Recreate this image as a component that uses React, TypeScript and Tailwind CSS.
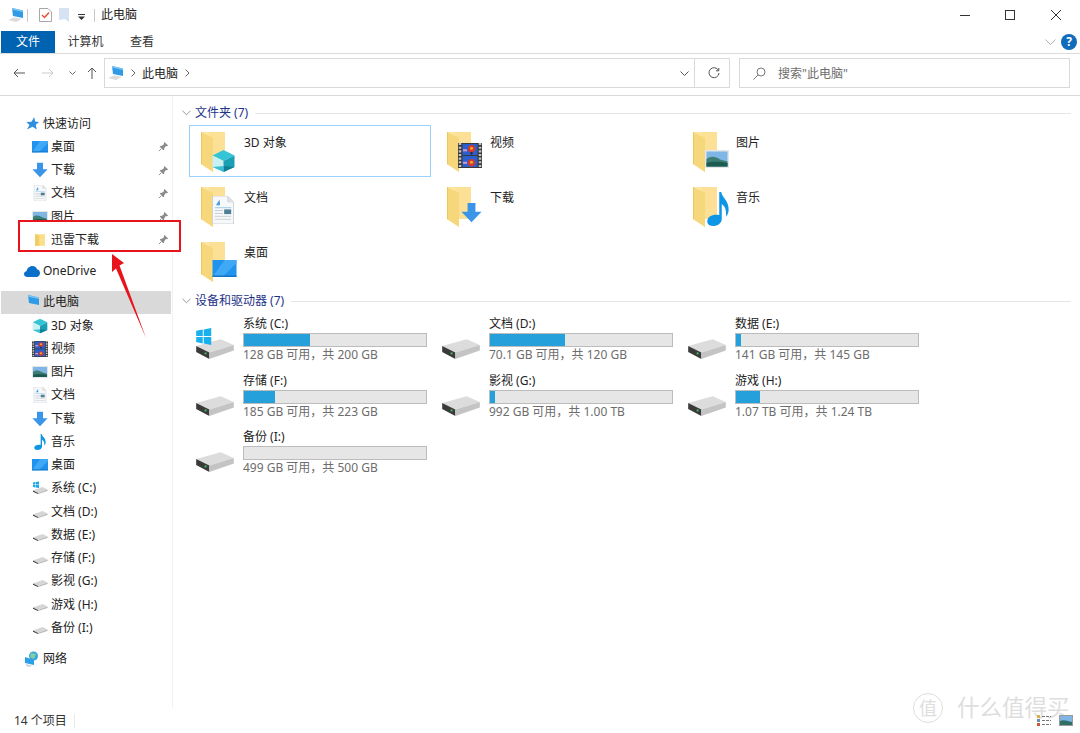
import React from 'react';

// Drawings on a 24x24 box, reused by the nav pane and the folder tiles
function CubeArt() {
  return (
    <g>
      <path d="M12 1 23 6.5 12 12 1 6.5Z" fill="#35c4d6" />
      <path d="M1 6.5 12 12V23L1 18Z" fill="#c9f1f4" />
      <path d="M23 6.5 12 12V23L23 18Z" fill="#1a9fb5" />
      <path d="M12 17 23 18 12 23Z" fill="#0f7f95" />
      <path d="M1 18 12 17V23Z" fill="#3cc0d2" />
    </g>
  );
}

function FilmArt() {
  return (
    <g>
      <rect x="0" y="0" width="24" height="24" fill="#3a3a3a" />
      <path d="M2 0V24M22 0V24" stroke="#c4c4c4" strokeWidth="2.500" strokeDasharray="2 1.500" />
      <rect x="4.500" y="1" width="15" height="10.500" fill="#2a5fd0" />
      <rect x="4.500" y="12.500" width="15" height="10.500" fill="#2a5fd0" />
      <circle cx="13.500" cy="5.500" r="3.600" fill="#d6372c" />
      <circle cx="13.500" cy="5" r="1.500" fill="#e8b020" />
      <rect x="12.500" y="8.800" width="2" height="2.200" fill="#222" />
      <circle cx="13.500" cy="19" r="3.600" fill="#d6372c" />
      <circle cx="13.500" cy="18.500" r="1.500" fill="#e8b020" />
      <rect x="5" y="6" width="4" height="2" fill="#d995c8" />
      <rect x="5" y="18" width="4" height="2" fill="#d995c8" />
    </g>
  );
}

function PictureArt() {
  return (
    <g>
      <rect x="0" y="3" width="24" height="18" fill="#e4e6e8" />
      <rect x="1.5" y="4.5" width="21" height="15" fill="#7fb6e6" />
      <path d="M1.5 12C6 8.5 11 9.5 15 12.5L22.5 14.5V19.5H1.5Z" fill="#3d7f74" />
      <path d="M1.5 16C8 14 16 15 22.5 16V19.5H1.5Z" fill="#1d5a50" />
    </g>
  );
}

function DocArt() {
  return (
    <g>
      <path d="M3 0H16L21 5V24H3Z" fill="#f7f8fa" stroke="#c8ccd0" strokeWidth="0.7" />
      <path d="M16 0V5H21" fill="#dfe3e6" stroke="#c8ccd0" strokeWidth="0.5" />
      <path d="M6 8 9 3 9.5 8Z" fill="#4a9bd9" />
      <rect x="5" y="9.5" width="14" height="1" fill="#a9d1ef" />
      <rect x="13" y="11.5" width="6" height="4" fill="#4e7f96" />
      <rect x="5" y="12" width="7" height="0.8" fill="#c9cdd1" />
      <rect x="5" y="14.5" width="7" height="0.8" fill="#c9cdd1" />
      <rect x="5" y="17" width="14" height="0.8" fill="#c9cdd1" />
      <rect x="5" y="19.5" width="14" height="0.8" fill="#c9cdd1" />
    </g>
  );
}

function DownArt() {
  return <path d="M7.5 1H16.5V11H23.5L12 23 .5 11H7.5Z" fill="#3a95e8" />;
}

function NoteArt() {
  return (
    <path
      d="M13 0H14.6C15 4 21 6 20.5 13 20.2 15 19.4 16.5 18.4 17.4 19 12 17 9.5 15 8.6V19C15 22 11.500 24 8 24 4.500 24 3 22.300 3.500 20 4 17.500 7.500 15.500 13 16.300Z"
      fill="#0d96e6"
    />
  );
}

function DesktopArt() {
  return (
    <g>
      <rect x="0" y="3" width="24" height="17" fill="#1f93ee" />
      <path d="M0 20 12 3H24V6L10 20Z" fill="#3fa9f5" />
      <rect x="0" y="18.500" width="24" height="1.500" fill="#1475c4" />
    </g>
  );
}

function Star({ className }: { className?: string }) {
  return (
    <svg viewBox="0 0 16 16" className={className}>
      <path d="M9.800 1 10.800 5.800 15 6.500 11.500 9.400 12.500 14.500 8 11.500 2 14.500 4.800 9.500 1.500 6.500 7 6Z" fill="#2f8fdc" />
    </svg>
  );
}

function Pin() {
  return (
    <svg viewBox="0 0 12 12" className="w-[11px] h-[11px]">
      <path d="M7 1 11 5 9.800 5.600 8.500 5.500 6.800 7.800 6.600 9.500 5.700 10 2 6.300 2.500 5.400 4.300 5.200 6.500 3.500 6.400 2.200Z" fill="#8a8a8a" />
      <path d="M3.500 8.500 1 11" stroke="#8a8a8a" strokeWidth="1" />
    </svg>
  );
}

function SmallDrive({ win }: { win?: boolean }) {
  return (
    <svg viewBox="0 0 16 16" className="w-4 h-4">
      <path d="M1 10.500 10.500 7 15.500 9.500 6 13Z" fill="#d6d6d6" />
      <path d="M1 10.500 6 13V14L1 11.800Z" fill="#3c3c3c" />
      <path d="M6 13 15.500 9.500V11L6 14Z" fill="#b8b8b8" />
      {win && (
        <path d="M1 2.500 3.500 2V4.500H1ZM4 2 7 1.500V4.500H4ZM1 5H3.500V7.500L1 7ZM4 5H7V8L4 7.500Z" fill="#18a7e8" />
      )}
    </svg>
  );
}

function BigDrive({ win }: { win?: boolean }) {
  return (
    <svg viewBox="0 0 42 34" className="w-[40px] h-[32px]">
      <path d="M1 19 27 12 41 18 15 26Z" fill="#dcdcdc" />
      <path d="M1 19 15 26V33L1 25.500Z" fill="#3a3a3a" />
      <path d="M15 26 41 18V24L15 33Z" fill="#c4c4c4" />
      <rect x="10" y="26" width="2" height="2" fill="#3fc46a" />
      {win && (
        <path d="M1 3 8 1.500V8.500H1ZM9 1.500 17 0V8.500H9ZM1 9.500H8V16.500L1 15ZM9 9.500H17V18L9 16.500Z" fill="#19b0ee" />
      )}
    </svg>
  );
}

function ThisPc({ className }: { className?: string }) {
  return (
    <svg viewBox="0 0 16 14" className={className}>
      <path d="M4 0 15 2.500V10L5 8Z" fill="#2f9be6" />
      <path d="M4 0 15 2.500V4L4.300 1.800Z" fill="#7cc4f2" />
      <path d="M0 12 6 9.500 14 11 8 14Z" fill="#dcdcdc" />
    </svg>
  );
}

function Cloud() {
  return (
    <svg viewBox="0 0 16 11" className="w-[16px] h-[11px]">
      <path d="M3.500 11C1.500 11 0 9.700 0 8 0 6.500 1 5.400 2.500 5.200 3 2.300 5.500 0 8.300 0 10.500 0 12.300 1.200 13 3.200 14.800 3.500 16 5 16 7 16 9.300 14.500 11 12.500 11Z" fill="#0a6fc9" />
    </svg>
  );
}

function NetworkIcon() {
  return (
    <svg viewBox="0 0 16 16" className="w-4 h-4">
      <circle cx="9.500" cy="5" r="4.500" fill="#3aa6d8" />
      <path d="M7 2 12 3 10 8 6 6Z" fill="#7fd0a8" />
      <path d="M1 6 10 9V14L1 12Z" fill="#2aa0ea" />
      <path d="M2 13 8 14.500 6 16 2 15Z" fill="#cfd3d6" />
    </svg>
  );
}

function FolderTile({ children }: { children: React.ReactNode }) {
  return (
    <svg viewBox="0 0 40 44" className="w-10 h-11 shrink-0">
      <path d="M0 0H24V32H12V40L0 32Z" fill="#fde6a2" />
      <rect x="8" y="0" width="16" height="32" fill="#fbe096" />
      <path d="M0 0 12 6V40L0 32Z" fill="#f7d77c" />
      <path d="M0 0H1V32.500L0 32Z" fill="#f0c65e" />
      {children}
    </svg>
  );
}

function SmallSvg({ children }: { children: React.ReactNode }) {
  return (
    <svg viewBox="0 0 24 24" className="w-4 h-4">
      {children}
    </svg>
  );
}

function SideRow({ icon, label, pin, top }: { icon: React.ReactNode; label: string; pin?: boolean; top?: boolean }) {
  return (
    <div className={`relative z-10 flex items-center h-[23.25px] ${top ? 'pl-[24px]' : 'pl-[32px]'}`}>
      <span className="w-4 h-4 flex items-center justify-center shrink-0">{icon}</span>
      <span className="ml-[3px] text-[#222]">{label}</span>
      {pin && (
        <span className="absolute left-[158px] top-[6px]">
          <Pin />
        </span>
      )}
    </div>
  );
}

const folders = [
  { name: '3D 对象', art: <svg x="10" y="17" width="25" height="24" viewBox="0 0 24 24"><CubeArt /></svg>, selected: true },
  { name: '视频', art: <svg x="11" y="11" width="24" height="25" viewBox="0 0 24 24" preserveAspectRatio="none"><FilmArt /></svg> },
  { name: '图片', art: <svg x="12" y="15" width="24" height="24" viewBox="0 0 24 24"><PictureArt /></svg> },
  { name: '文档', art: <svg x="8" y="9" width="28" height="28" viewBox="0 0 24 24"><DocArt /></svg> },
  { name: '下载', art: <svg x="14" y="15" width="21" height="21" viewBox="0 0 24 24"><DownArt /></svg> },
  { name: '音乐', art: <svg x="10" y="5" width="30" height="34" viewBox="0 0 24 24" preserveAspectRatio="none"><NoteArt /></svg> },
  { name: '桌面', art: <svg x="11" y="15" width="25" height="24" viewBox="0 0 24 24"><DesktopArt /></svg> },
];

const drives = [
  { name: '系统 (C:)', used: 36, info: '128 GB 可用，共 200 GB', win: true },
  { name: '文档 (D:)', used: 41, info: '70.1 GB 可用，共 120 GB' },
  { name: '数据 (E:)', used: 3, info: '141 GB 可用，共 145 GB' },
  { name: '存储 (F:)', used: 17, info: '185 GB 可用，共 223 GB' },
  { name: '影视 (G:)', used: 3, info: '992 GB 可用，共 1.00 TB' },
  { name: '游戏 (H:)', used: 13, info: '1.07 TB 可用，共 1.24 TB' },
  { name: '备份 (I:)', used: 0, info: '499 GB 可用，共 500 GB' },
];

function GroupHeader({ label }: { label: string }) {
  return (
    <div className="flex items-center h-4">
      <svg viewBox="0 0 10 6" className="w-[9px] h-[6px] ml-[9px] mr-[4px]">
        <path d="M.5.5 5 5 9.500.5" fill="none" stroke="#8a8a8a" />
      </svg>
      <span className="text-[#1e3287]">{label}</span>
      <span className="flex-1 h-px bg-[#e5e5e5] ml-[7px] mr-[9px]" />
    </div>
  );
}

export default function App() {
  return (
    <div className="relative w-[1080px] h-[733px] overflow-hidden bg-white text-[12px] leading-4 text-[#222] font-['Noto_Sans','Noto_Sans_CJK_SC',sans-serif]">
      {/* title bar */}
      <div className="flex items-center h-[30px]">
        <ThisPc className="w-4 h-[14px] ml-[8px]" />
        <span className="w-px h-[13px] bg-[#c8c8c8] ml-[3px]" />
        <svg viewBox="0 0 13 14" className="w-[13px] h-[14px] ml-[11px]">
          <path d="M.5.5H9L12.500 4V13.500H.5Z" fill="#fff" stroke="#a8a8a8" />
          <path d="M3 7 5.500 9.500 10 4.500" fill="none" stroke="#e2502c" strokeWidth="1.400" />
        </svg>
        <svg viewBox="0 0 10 14" className="w-[10px] h-[14px] ml-[7px]">
          <path d="M0 0H10V14L6 11 0 12Z" fill="#d5e3f2" />
        </svg>
        <svg viewBox="0 0 7 6" className="w-[7px] h-[6px] ml-[9px] mt-[3px]">
          <path d="M0 0H7V1H0ZM0 2.500H7L3.500 6Z" fill="#333" />
        </svg>
        <span className="w-px h-[13px] bg-[#c8c8c8] ml-[9px]" />
        <span className="ml-[6px]">此电脑</span>
        <div className="ml-auto flex items-center">
          <svg viewBox="0 0 10 1" className="w-[10px] h-px mr-[35px]"><rect width="10" height="1" fill="#333" /></svg>
          <svg viewBox="0 0 10 10" className="w-[10px] h-[10px] mr-[36px]"><rect x=".5" y=".5" width="9" height="9" fill="none" stroke="#333" /></svg>
          <svg viewBox="0 0 10 10" className="w-[10px] h-[10px] mr-[19px]"><path d="M0 0 10 10M10 0 0 10" stroke="#333" /></svg>
        </div>
      </div>

      {/* ribbon tabs */}
      <div className="flex items-center h-[23px] pl-px">
        <div className="w-[54px] h-[22px] bg-[#0063b1] text-white flex items-center justify-center">文件</div>
        <div className="w-[61px] text-center text-[#333]">计算机</div>
        <div className="w-[52px] text-center text-[#333]">查看</div>
        <div className="ml-auto flex items-center mr-[3px]">
          <svg viewBox="0 0 11 6" className="w-[11px] h-[6px] mr-[4px]"><path d="M.5.5 5.500 5.500 10.500.5" fill="none" stroke="#b0b0b0" /></svg>
          <span className="w-4 h-4 rounded-full bg-[#0f6cbd] text-white font-bold flex items-center justify-center ml-[1px]">?</span>
        </div>
      </div>
      <div className="h-px bg-[#dadbdc]" />

      {/* address row */}
      <div className="flex items-center h-[42px] pb-[3px] border-b border-[#d9d9d9]">
        <svg viewBox="0 0 12 10" className="w-3 h-[10px] ml-[13px]"><path d="M12 5H1M5 1 1 5 5 9" fill="none" stroke="#555" /></svg>
        <svg viewBox="0 0 12 10" className="w-3 h-[10px] ml-[17px]"><path d="M0 5H11M7 1 11 5 7 9" fill="none" stroke="#c9c9c9" /></svg>
        <svg viewBox="0 0 7 5" className="w-[7px] h-[5px] ml-[15px]"><path d="M.5.5 3.500 3.500 6.500.5" fill="none" stroke="#666" /></svg>
        <svg viewBox="0 0 10 12" className="w-[10px] h-3 ml-[11px]"><path d="M5 12V1M1 5 5 1 9 5" fill="none" stroke="#555" /></svg>
        <div className="flex items-center w-[626px] h-[30px] ml-[7px] border border-[#d9d9d9] pl-[3px]">
          <ThisPc className="w-4 h-[14px]" />
          <svg viewBox="0 0 5 8" className="w-[5px] h-2 ml-[7px]"><path d="M.5.5 4 4 .5 7.500" fill="none" stroke="#666" /></svg>
          <span className="ml-[6px] pt-px">此电脑</span>
          <svg viewBox="0 0 5 8" className="w-[5px] h-2 ml-[7px]"><path d="M.5.5 4 4 .5 7.500" fill="none" stroke="#666" /></svg>
          <svg viewBox="0 0 9 5" className="w-[9px] h-[5px] ml-[490px]"><path d="M.5.5 4.500 4.500 8.500.5" fill="none" stroke="#555" /></svg>
          <span className="h-[28px] w-px bg-[#d9d9d9] ml-[5px]" />
          <svg viewBox="0 0 12 12" className="w-3 h-3 ml-[13px]"><path d="M10.500 3.500A5 5 0 1 0 11 6M10.800 1V3.800H8" fill="none" stroke="#555" /></svg>
        </div>
        <div className="flex items-center w-[331px] h-[30px] ml-[9px] border border-[#d9d9d9] pl-[13px] text-[#6d6d6d]">
          <svg viewBox="0 0 13 13" className="w-[13px] h-[13px]"><circle cx="8" cy="5" r="4" fill="none" stroke="#777" /><path d="M5 8 .5 12.500" stroke="#777" /></svg>
          <span className="ml-[12px] pt-px">搜索"此电脑"</span>
        </div>
      </div>

      {/* body */}
      <div className="flex h-[612px]">
        <div className="w-[173px] shrink-0 border-r border-[#f1f1f1] pt-[16px]">
          <SideRow top icon={<Star className="w-[15px] h-[15px]" />} label="快速访问" />
          <SideRow pin icon={<SmallSvg><DesktopArt /></SmallSvg>} label="桌面" />
          <SideRow pin icon={<SmallSvg><DownArt /></SmallSvg>} label="下载" />
          <SideRow pin icon={<SmallSvg><DocArt /></SmallSvg>} label="文档" />
          <SideRow pin icon={<SmallSvg><PictureArt /></SmallSvg>} label="图片" />
          <div className="relative">
            <div className="absolute left-[18px] top-[-8px] w-[163px] h-[32px] bg-white border-2 border-[#e8141c] z-10" />
            <div className="relative z-20">
              <SideRow pin icon={
                <svg viewBox="0 0 12 14" className="w-[10px] h-3">
                  <path d="M0 0H12V14H0Z" fill="#fbdf8c" />
                  <path d="M0 0 5 2V14H0Z" fill="#f4cd62" />
                </svg>
              } label="迅雷下载" />
            </div>
          </div>

          <div className="mt-2">
            <SideRow top icon={<Cloud />} label="OneDrive" />
          </div>

          <div className="mt-2 ml-px w-[170px] bg-[#d9d9d9]">
            <div className="-ml-px">
              <SideRow top icon={<ThisPc className="w-4 h-[14px]" />} label="此电脑" />
            </div>
          </div>
          <SideRow icon={<SmallSvg><CubeArt /></SmallSvg>} label="3D 对象" />
          <SideRow icon={<SmallSvg><FilmArt /></SmallSvg>} label="视频" />
          <SideRow icon={<SmallSvg><PictureArt /></SmallSvg>} label="图片" />
          <SideRow icon={<SmallSvg><DocArt /></SmallSvg>} label="文档" />
          <SideRow icon={<SmallSvg><DownArt /></SmallSvg>} label="下载" />
          <SideRow icon={<SmallSvg><NoteArt /></SmallSvg>} label="音乐" />
          <SideRow icon={<SmallSvg><DesktopArt /></SmallSvg>} label="桌面" />
          <SideRow icon={<SmallDrive win />} label="系统 (C:)" />
          <SideRow icon={<SmallDrive />} label="文档 (D:)" />
          <SideRow icon={<SmallDrive />} label="数据 (E:)" />
          <SideRow icon={<SmallDrive />} label="存储 (F:)" />
          <SideRow icon={<SmallDrive />} label="影视 (G:)" />
          <SideRow icon={<SmallDrive />} label="游戏 (H:)" />
          <SideRow icon={<SmallDrive />} label="备份 (I:)" />

          <div className="mt-2">
            <SideRow top icon={<NetworkIcon />} label="网络" />
          </div>
        </div>

        <div className="flex-1 pt-[9px]">
          <GroupHeader label="文件夹 (7)" />
          <div className="grid grid-cols-[repeat(3,242px)] gap-x-1 gap-y-[3px] auto-rows-[52px] mt-[4px] ml-[16px]">
            {folders.map((f) => (
              <div
                key={f.name}
                className={`flex items-start pl-[11px] pt-[6px] border ${f.selected ? 'border-[#99d1ff]' : 'border-transparent'}`}
              >
                <FolderTile>{f.art}</FolderTile>
                <span className="ml-[3px] mt-[3px]">{f.name}</span>
              </div>
            ))}
          </div>

          <div className="mt-[6px]">
            <GroupHeader label="设备和驱动器 (7)" />
          </div>
          <div className="grid grid-cols-[repeat(3,246px)] auto-rows-[56.5px] mt-[7px] ml-[22px]">
            {drives.map((d) => (
              <div key={d.name} className="flex items-start">
                <div className="w-[48px] pt-[12px] shrink-0">
                  <BigDrive win={d.win} />
                </div>
                <div className="w-[184px]">
                  <div>{d.name}</div>
                  <div className="h-[14px] bg-[#e6e6e6] border border-[#bcbcbc] mt-px">
                    <div className="h-full bg-[#26a0da]" style={{ width: `${d.used}%` }} />
                  </div>
                  <div className="text-[#6d6d6d]">{d.info}</div>
                </div>
              </div>
            ))}
          </div>
        </div>
      </div>

      {/* status bar */}
      <div className="flex items-center h-[25px] pl-[14px] text-[#333]">
        <span>14 个项目</span>
        <span className="w-px h-[14px] bg-[#e8e8e8] ml-[7px]" />
      </div>

      {/* watermark */}
      <div className="absolute left-[913px] top-[693px] flex items-center text-[#dedede]">
        <span className="w-[30px] h-[30px] rounded-full border border-[#dedede] flex items-center justify-center text-[18px]">值</span>
        <span className="ml-[14px] text-[22.5px] leading-7">什么值得买</span>
      </div>

      {/* view toggles */}
      <div className="absolute left-[1037px] top-[715px] flex items-center gap-[8px]">
        <svg viewBox="0 0 14 11" className="w-[14px] h-[11px]">
          <rect x="0" y="0" width="3" height="3" fill="#d9b04a" />
          <rect x="0" y="4" width="3" height="3" fill="#6a8fb0" />
          <rect x="0" y="8" width="3" height="3" fill="#c9573a" />
          <path d="M5 1.500H14M5 5.500H14M5 9.500H14" stroke="#777" strokeDasharray="3 1" />
        </svg>
        <svg viewBox="0 0 14 11" className="w-[14px] h-[11px]">
          <rect x=".5" y=".5" width="13" height="10" fill="#7fb6e6" stroke="#9a9a9a" />
          <path d="M1 6C5 4 9 6 13 7V10H1Z" fill="#2f6f66" />
        </svg>
      </div>

      {/* red arrow annotation */}
      <svg viewBox="0 0 1080 733" className="absolute inset-0 w-[1080px] h-[733px] pointer-events-none z-30">
        <path d="M112 254 124 263 119.500 265.500 146 338 116 268.500 112 272Z" fill="#e8141c" />
      </svg>
    </div>
  );
}
